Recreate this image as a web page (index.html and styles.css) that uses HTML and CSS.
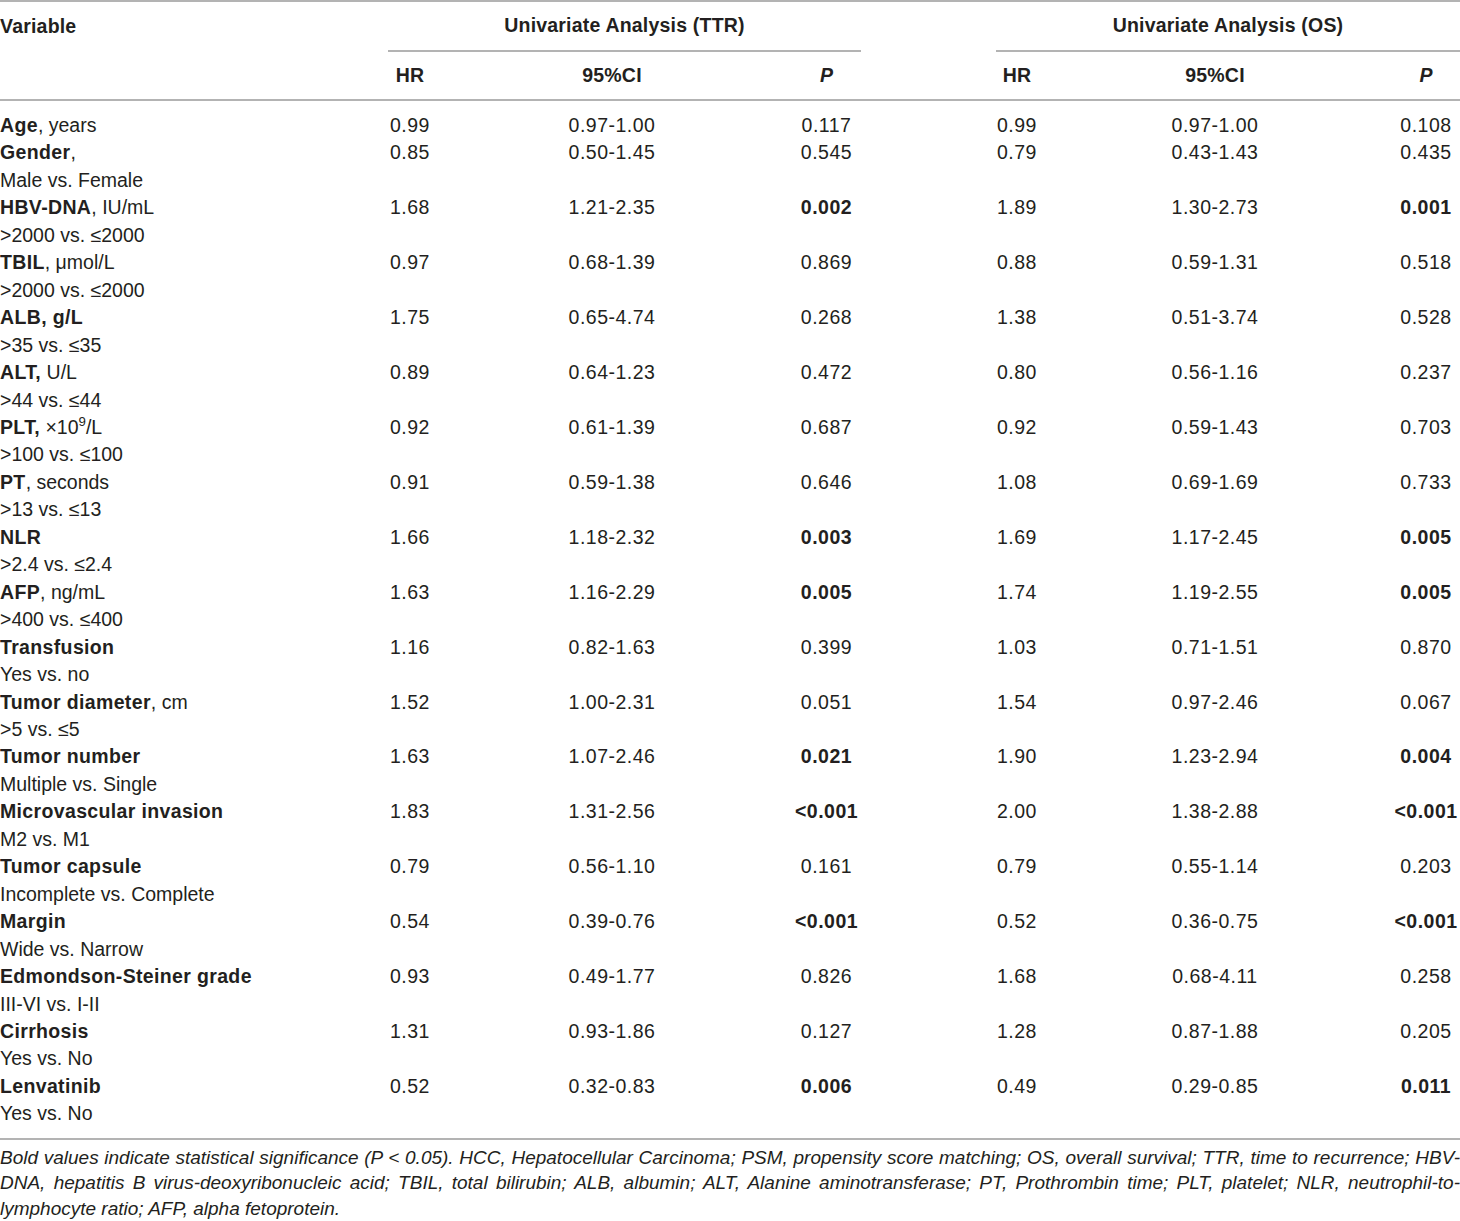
FILE: index.html
```html
<!DOCTYPE html>
<html lang="en">
<head>
    <meta charset="UTF-8">
    <meta name="viewport" content="width=device-width, initial-scale=1.0">
    <title>Univariate Analysis (TTR / OS)</title>
    <link rel="stylesheet" href="styles.css">
</head>
<body>
    <div class="table-wrap">
        <table class="stats">
            <colgroup>
                <col class="c-var">
                <col class="c-hr1">
                <col class="c-ci1">
                <col class="c-p1">
                <col class="c-gap">
                <col class="c-hr2">
                <col class="c-ci2">
                <col class="c-p2">
            </colgroup>
            <thead>
                <tr class="group-row">
                    <th class="var-head">Variable</th>
                    <th class="group" colspan="3">Univariate Analysis (TTR)</th>
                    <th></th>
                    <th class="group" colspan="3">Univariate Analysis (OS)</th>
                </tr>
                <tr class="sub-row">
                    <th></th>
                    <th>HR</th>
                    <th>95%CI</th>
                    <th><i>P</i></th>
                    <th></th>
                    <th>HR</th>
                    <th>95%CI</th>
                    <th><i>P</i></th>
                </tr>
            </thead>
            <tbody>
                <tr>
                    <td><b>Age</b>, years</td>
                    <td>0.99</td><td>0.97-1.00</td><td>0.117</td><td></td>
                    <td>0.99</td><td>0.97-1.00</td><td>0.108</td>
                </tr>
                <tr>
                    <td><b>Gender</b>,<br>Male vs. Female</td>
                    <td>0.85</td><td>0.50-1.45</td><td>0.545</td><td></td>
                    <td>0.79</td><td>0.43-1.43</td><td>0.435</td>
                </tr>
                <tr>
                    <td><b>HBV-DNA</b>, IU/mL<br>&gt;2000 vs. ≤2000</td>
                    <td>1.68</td><td>1.21-2.35</td><td><b>0.002</b></td><td></td>
                    <td>1.89</td><td>1.30-2.73</td><td><b>0.001</b></td>
                </tr>
                <tr>
                    <td><b>TBIL</b>, μmol/L<br>&gt;2000 vs. ≤2000</td>
                    <td>0.97</td><td>0.68-1.39</td><td>0.869</td><td></td>
                    <td>0.88</td><td>0.59-1.31</td><td>0.518</td>
                </tr>
                <tr>
                    <td><b>ALB, g/L</b><br>&gt;35 vs. ≤35</td>
                    <td>1.75</td><td>0.65-4.74</td><td>0.268</td><td></td>
                    <td>1.38</td><td>0.51-3.74</td><td>0.528</td>
                </tr>
                <tr>
                    <td><b>ALT,</b> U/L<br>&gt;44 vs. ≤44</td>
                    <td>0.89</td><td>0.64-1.23</td><td>0.472</td><td></td>
                    <td>0.80</td><td>0.56-1.16</td><td>0.237</td>
                </tr>
                <tr>
                    <td><b>PLT,</b> ×10<sup>9</sup>/L<br>&gt;100 vs. ≤100</td>
                    <td>0.92</td><td>0.61-1.39</td><td>0.687</td><td></td>
                    <td>0.92</td><td>0.59-1.43</td><td>0.703</td>
                </tr>
                <tr>
                    <td><b>PT</b>, seconds<br>&gt;13 vs. ≤13</td>
                    <td>0.91</td><td>0.59-1.38</td><td>0.646</td><td></td>
                    <td>1.08</td><td>0.69-1.69</td><td>0.733</td>
                </tr>
                <tr>
                    <td><b>NLR</b><br>&gt;2.4 vs. ≤2.4</td>
                    <td>1.66</td><td>1.18-2.32</td><td><b>0.003</b></td><td></td>
                    <td>1.69</td><td>1.17-2.45</td><td><b>0.005</b></td>
                </tr>
                <tr>
                    <td><b>AFP</b>, ng/mL<br>&gt;400 vs. ≤400</td>
                    <td>1.63</td><td>1.16-2.29</td><td><b>0.005</b></td><td></td>
                    <td>1.74</td><td>1.19-2.55</td><td><b>0.005</b></td>
                </tr>
                <tr>
                    <td><b>Transfusion</b><br>Yes vs. no</td>
                    <td>1.16</td><td>0.82-1.63</td><td>0.399</td><td></td>
                    <td>1.03</td><td>0.71-1.51</td><td>0.870</td>
                </tr>
                <tr>
                    <td><b>Tumor diameter</b>, cm<br>&gt;5 vs. ≤5</td>
                    <td>1.52</td><td>1.00-2.31</td><td>0.051</td><td></td>
                    <td>1.54</td><td>0.97-2.46</td><td>0.067</td>
                </tr>
                <tr>
                    <td><b>Tumor number</b><br>Multiple vs. Single</td>
                    <td>1.63</td><td>1.07-2.46</td><td><b>0.021</b></td><td></td>
                    <td>1.90</td><td>1.23-2.94</td><td><b>0.004</b></td>
                </tr>
                <tr>
                    <td><b>Microvascular invasion</b><br>M2 vs. M1</td>
                    <td>1.83</td><td>1.31-2.56</td><td><b>&lt;0.001</b></td><td></td>
                    <td>2.00</td><td>1.38-2.88</td><td><b>&lt;0.001</b></td>
                </tr>
                <tr>
                    <td><b>Tumor capsule</b><br>Incomplete vs. Complete</td>
                    <td>0.79</td><td>0.56-1.10</td><td>0.161</td><td></td>
                    <td>0.79</td><td>0.55-1.14</td><td>0.203</td>
                </tr>
                <tr>
                    <td><b>Margin</b><br>Wide vs. Narrow</td>
                    <td>0.54</td><td>0.39-0.76</td><td><b>&lt;0.001</b></td><td></td>
                    <td>0.52</td><td>0.36-0.75</td><td><b>&lt;0.001</b></td>
                </tr>
                <tr>
                    <td><b>Edmondson-Steiner grade</b><br>III-VI vs. I-II</td>
                    <td>0.93</td><td>0.49-1.77</td><td>0.826</td><td></td>
                    <td>1.68</td><td>0.68-4.11</td><td>0.258</td>
                </tr>
                <tr>
                    <td><b>Cirrhosis</b><br>Yes vs. No</td>
                    <td>1.31</td><td>0.93-1.86</td><td>0.127</td><td></td>
                    <td>1.28</td><td>0.87-1.88</td><td>0.205</td>
                </tr>
                <tr>
                    <td><b>Lenvatinib</b><br>Yes vs. No</td>
                    <td>0.52</td><td>0.32-0.83</td><td><b>0.006</b></td><td></td>
                    <td>0.49</td><td>0.29-0.85</td><td><b>0.011</b></td>
                </tr>
            </tbody>
        </table>

        <!-- 表注，逐行两端对齐 -->
        <p class="note">
            <span class="note-line">Bold values indicate statistical significance (P &lt; 0.05). HCC, Hepatocellular Carcinoma; PSM, propensity score matching; OS, overall survival; TTR, time to recurrence; HBV-</span>
            <span class="note-line">DNA, hepatitis B virus-deoxyribonucleic acid; TBIL, total bilirubin; ALB, albumin; ALT, Alanine aminotransferase; PT, Prothrombin time; PLT, platelet; NLR, neutrophil-to-</span>
            <span class="note-line last">lymphocyte ratio; AFP, alpha fetoprotein.</span>
        </p>
    </div>
</body>
</html>
```

FILE: styles.css
```css
body {
    margin: 0;
    background-color: #fff;
    color: #231f20;
    font-family: 'Liberation Sans', Arial, sans-serif;
}
.table-wrap {
    width: 1460px;
}
.stats {
    width: 1460px;
    table-layout: fixed;
    border-collapse: separate;
    border-spacing: 0;
    border-top: 2px solid #b3b3b3;
    border-bottom: 2px solid #b3b3b3;
    font-size: 19.5px;
    line-height: 27.45px;
}
.c-var { width: 388px; }
.c-hr1 { width: 44px; }
.c-ci1 { width: 360px; }
.c-p1 { width: 69px; }
.c-gap { width: 135px; }
.c-hr2 { width: 42px; }
.c-ci2 { width: 354px; }
.c-p2 { width: 68px; }
th, td {
    padding: 0;
    text-align: center;
    white-space: nowrap;
}
th {
    font-weight: bold;
    letter-spacing: 0.2px;
}
.group-row th {
    height: 48px;
    vertical-align: middle;
}
.group-row th.group {
    border-bottom: 2px solid #b3b3b3;
}
.var-head {
    text-align: left;
}
.sub-row th {
    height: 47px;
    vertical-align: middle;
    border-bottom: 2px solid #b3b3b3;
}
td {
    vertical-align: top;
    letter-spacing: 0.5px;
}
td:first-child {
    text-align: left;
    letter-spacing: 0;
}
td:first-child b {
    letter-spacing: 0.35px;
}
tbody tr:first-child td {
    padding-top: 11px;
}
tbody tr:last-child td {
    padding-bottom: 10px;
}
sup {
    font-size: 0.68em;
    line-height: 0;
    vertical-align: 0.6em;
}
.note {
    margin: 0;
    padding-top: 5px;
    font-size: 19px;
    line-height: 25.5px;
    font-style: italic;
}
.note-line {
    display: block;
    text-align: justify;
    text-align-last: justify;
    white-space: nowrap;
}
.note-line.last {
    text-align-last: left;
}
```
